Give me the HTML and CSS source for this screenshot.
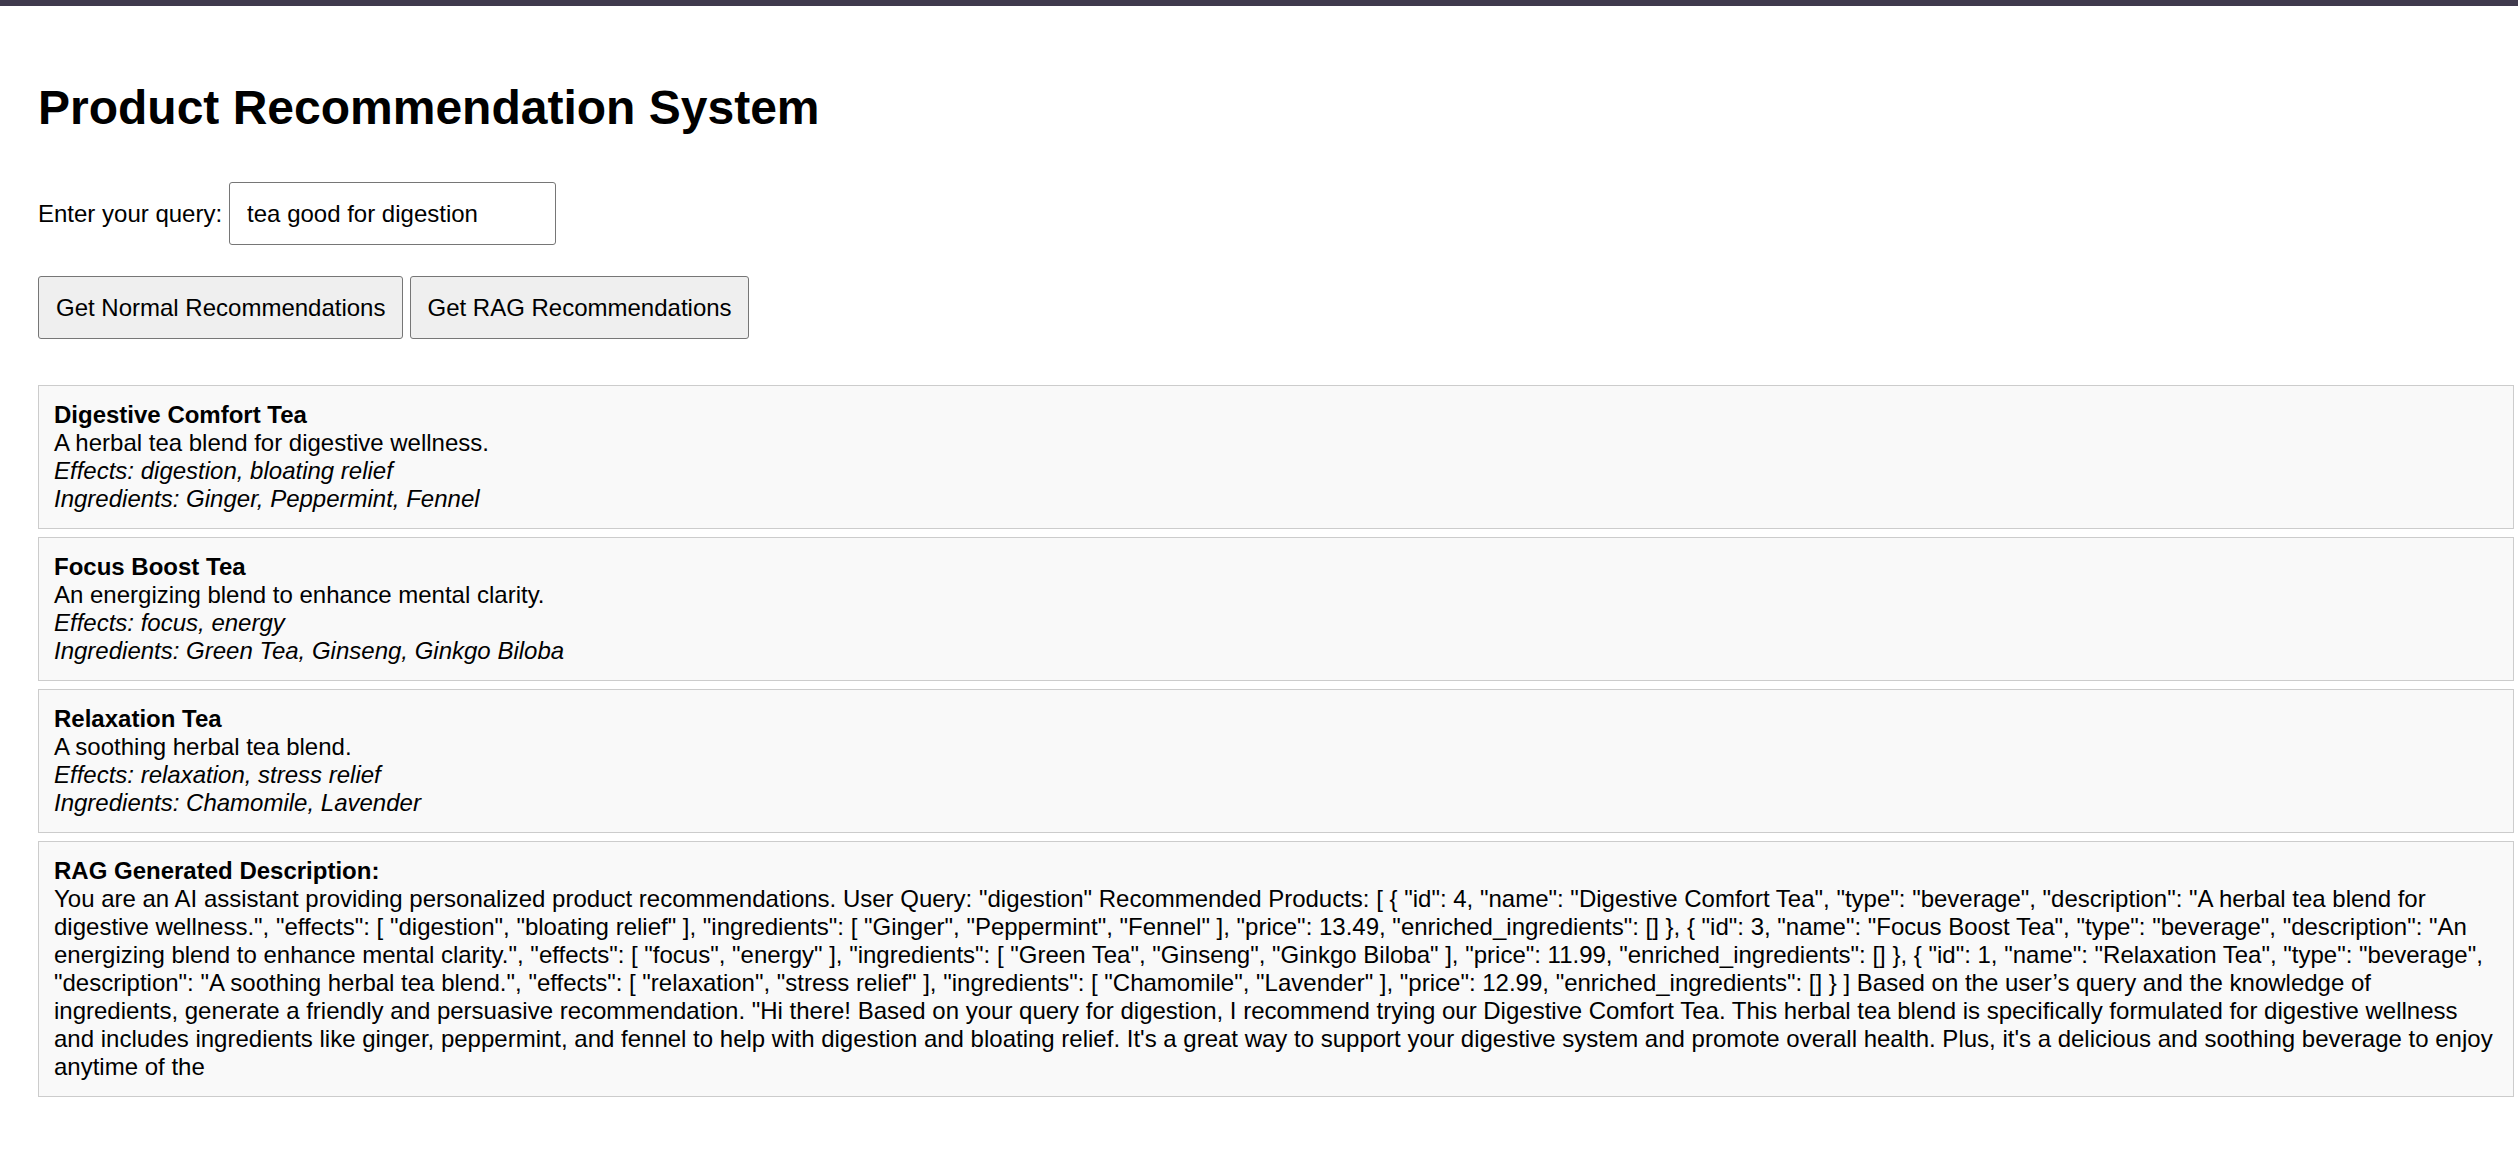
FILE: index.html
```html
<!DOCTYPE html>
<html lang="en">
<head>
<meta charset="utf-8">
<title>Product Recommendation System</title>
<link rel="stylesheet" href="styles.css">
</head>
<body>
<div class="topbar"></div>
<main class="page">
  <h1 class="title">Product Recommendation System</h1>
  <div class="query-row">
    <label class="query-label" for="q">Enter your query:</label>
    <input class="query-input" id="q" type="text" value="tea good for digestion">
  </div>
  <div class="actions">
    <button class="btn" type="button">Get Normal Recommendations</button>
    <button class="btn btn-rag" type="button">Get RAG Recommendations</button>
  </div>
  <div class="results">
    <div class="card">
      <strong class="card-name">Digestive Comfort Tea</strong>
      <div>A herbal tea blend for digestive wellness.</div>
      <em class="card-line">Effects: digestion, bloating relief</em>
      <em class="card-line">Ingredients: Ginger, Peppermint, Fennel</em>
    </div>
    <div class="card">
      <strong class="card-name">Focus Boost Tea</strong>
      <div>An energizing blend to enhance mental clarity.</div>
      <em class="card-line">Effects: focus, energy</em>
      <em class="card-line">Ingredients: Green Tea, Ginseng, Ginkgo Biloba</em>
    </div>
    <div class="card">
      <strong class="card-name">Relaxation Tea</strong>
      <div>A soothing herbal tea blend.</div>
      <em class="card-line">Effects: relaxation, stress relief</em>
      <em class="card-line">Ingredients: Chamomile, Lavender</em>
    </div>
    <div class="card">
      <strong class="card-name">RAG Generated Description:</strong>
      <div>You are an AI assistant providing personalized product recommendations. User Query: "digestion" Recommended Products: [ { "id": 4, "name": "Digestive Comfort Tea", "type": "beverage", "description": "A herbal tea blend for digestive wellness.", "effects": [ "digestion", "bloating relief" ], "ingredients": [ "Ginger", "Peppermint", "Fennel" ], "price": 13.49, "enriched_ingredients": [] }, { "id": 3, "name": "Focus Boost Tea", "type": "beverage", "description": "An energizing blend to enhance mental clarity.", "effects": [ "focus", "energy" ], "ingredients": [ "Green Tea", "Ginseng", "Ginkgo Biloba" ], "price": 11.99, "enriched_ingredients": [] }, { "id": 1, "name": "Relaxation Tea", "type": "beverage", "description": "A soothing herbal tea blend.", "effects": [ "relaxation", "stress relief" ], "ingredients": [ "Chamomile", "Lavender" ], "price": 12.99, "enriched_ingredients": [] } ] Based on the user’s query and the knowledge of ingredients, generate a friendly and persuasive recommendation. "Hi there! Based on your query for digestion, I recommend trying our Digestive Comfort Tea. This herbal tea blend is specifically formulated for digestive wellness and includes ingredients like ginger, peppermint, and fennel to help with digestion and bloating relief. It's a great way to support your digestive system and promote overall health. Plus, it's a delicious and soothing beverage to enjoy anytime of the</div>
    </div>
  </div>
</main>
</body>
</html>
```

FILE: styles.css
```css
html, body {
  margin: 0;
  padding: 0;
  background: #ffffff;
}

body {
  font-family: "Liberation Sans", Arial, sans-serif;
  font-size: 24px;
  color: #000000;
}

.topbar {
  height: 6px;
  background: #3f3a4d;
}

.page {
  padding: 0 4px 40px 38px;
}

.title {
  margin: 74px 0 0 0;
  font-size: 48px;
  font-weight: bold;
  line-height: normal;
}

.query-row {
  display: flex;
  align-items: center;
  margin-top: 47px;
}

.query-label {
  font-size: 24px;
}

.query-input {
  box-sizing: border-box;
  margin: 0 0 0 7px;
  width: 327px;
  height: 63px;
  padding: 0 17px;
  border: 1px solid #767676;
  border-radius: 3px;
  font-family: "Liberation Sans", Arial, sans-serif;
  font-size: 24px;
  color: #000000;
  background: #ffffff;
}

.actions {
  display: flex;
  gap: 7px;
  margin-top: 31px;
}

.btn {
  box-sizing: border-box;
  height: 63px;
  margin: 0;
  padding: 0 17px;
  border: 1px solid #767676;
  border-radius: 3px;
  background: #efefef;
  font-family: "Liberation Sans", Arial, sans-serif;
  font-size: 24px;
  color: #000000;
}

.btn-rag {
  padding: 0 16px;
}

.results {
  display: flex;
  flex-direction: column;
  gap: 8px;
  margin-top: 46px;
}

.card {
  border: 1px solid #cccccc;
  background: #f9f9f9;
  padding: 15px;
  line-height: 28px;
}

.card-name {
  display: block;
  font-weight: bold;
}

.card-line {
  display: block;
  font-style: italic;
}
```
